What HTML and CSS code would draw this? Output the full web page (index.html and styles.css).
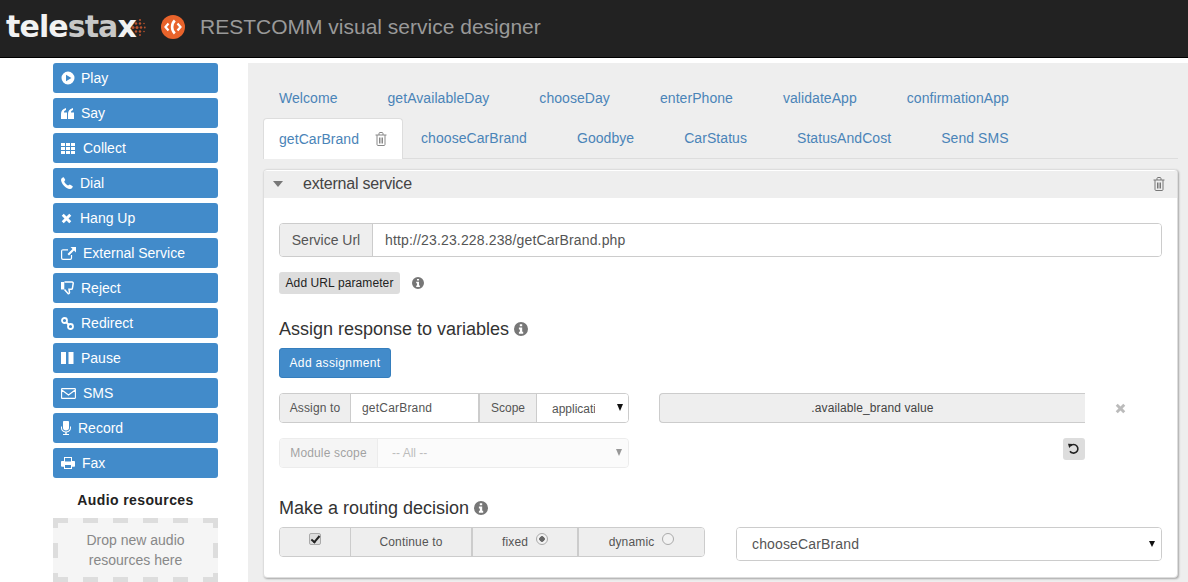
FILE: index.html
```html
<!DOCTYPE html>
<html lang="en">
<head>
    <meta charset="UTF-8">
    <title>RESTCOMM visual service designer</title>
    <link rel="stylesheet" href="styles.css">
</head>
<body>

    <svg class="defs" width="0" height="0">
        <symbol id="i-info" viewBox="0 0 14 14"><path fill-rule="evenodd" d="M7 0a7 7 0 1 0 0 14A7 7 0 0 0 7 0zM5.8 2.2h2.4v2H5.8zM4.9 5.5h3.3v4.3h1v1.9H4.9V9.8h1V7.4h-1z"/></symbol>
        <symbol id="i-trash" viewBox="0 0 12 14"><path fill="none" stroke="currentColor" d="M.5 3h11M2 3v9.5c0 .6.4 1 1 1h6c.6 0 1-.4 1-1V3M4 3V1.5c0-.6.4-1 1-1h2c.6 0 1 .4 1 1V3M4.5 5.5v6M6 5.5v6M7.5 5.5v6"/></symbol>
        <symbol id="i-times" viewBox="0 0 12 12"><path d="M3 .8 6 3.8 9 .8 11.2 3 8.2 6l3 3L9 11.2l-3-3-3 3L.8 9l3-3-3-3z"/></symbol>
    </svg>

    <header class="topbar">
        <span class="brand">tele<span class="brand-dim">sta</span>x</span>
        <svg class="brand-dots" width="15" height="19" viewBox="0 0 15 19"><g fill="#b8512c"><circle cx="9" cy="2" r="1"/><circle cx="5" cy="5.500" r="1.200"/><circle cx="9" cy="5.500" r="1.200"/><circle cx="13" cy="5.500" r=".8"/><circle cx="2" cy="9.500" r="1.500"/><circle cx="6" cy="9.500" r="1.500"/><circle cx="10" cy="9.500" r="1.300"/><circle cx="13.800" cy="9.500" r=".9"/><circle cx="5" cy="13.500" r="1.200"/><circle cx="9" cy="13.500" r="1.200"/><circle cx="13" cy="13.500" r=".8"/><circle cx="9" cy="17" r="1"/></g></svg>
        <svg class="rc-logo" width="24" height="24" viewBox="0 0 24 24"><circle cx="12" cy="12" r="12" fill="#e8632b"/><path fill="none" stroke="#fff" stroke-width="2.200" d="M7.500 8.500 4.500 12l3 3.500M16.500 8.500l3 3.500-3 3.500"/><path fill="none" stroke="#fff" stroke-width="2.600" d="M13.800 5.500C10.200 9 10.200 15 13.800 18.500"/></svg>
        <span class="app-title">RESTCOMM visual service designer</span>
    </header>

    <div class="layout">
        <aside class="sidebar">
            <div class="palette">
                <a class="verb verb-play"><svg width="14" height="14" viewBox="0 0 14 14"><path fill="#fff" fill-rule="evenodd" d="M7 .5a6.500 6.500 0 1 0 0 13 6.500 6.500 0 0 0 0-13zM5 3.800 10.400 7 5 10.200z"/></svg>Play</a>
                <a class="verb verb-say"><svg width="13" height="11" viewBox="0 0 13 11"><path fill="#fff" d="M0 6C0 3 1.500 1 5 0v2C3.500 2.400 3 3.200 3 4.500h3V11H0zM7 6c0-3 1.500-5 5-6v2c-1.500.4-2 1.200-2 2.500h3V11H7z"/></svg>Say</a>
                <a class="verb verb-collect"><svg width="14" height="11" viewBox="0 0 14 11"><path fill="#fff" d="M0 0h4v3H0zM5 0h4v3H5zM10 0h4v3h-4zM0 4h4v3H0zM5 4h4v3H5zM10 4h4v3h-4zM0 8h4v3H0zM5 8h4v3H5zM10 8h4v3h-4z"/></svg>Collect</a>
                <a class="verb verb-dial"><svg width="12" height="12" viewBox="0 0 12 12"><path fill="#fff" d="M2.800.2 4.300 3 3.200 4.500C3.800 6 5.400 7.700 7 8.600L8.800 7.500 11.800 9.200C11.700 10.500 10.500 12 9 12 4.500 11.500.5 7 0 3 0 1.500 1.500.3 2.800.2z"/></svg>Dial</a>
                <a class="verb verb-hangup"><svg width="11" height="11" viewBox="0 0 12 12"><use href="#i-times" fill="#fff"/></svg>Hang Up</a>
                <a class="verb verb-external"><svg width="15" height="13" viewBox="0 0 15 13"><path fill="none" stroke="#fff" stroke-width="1.200" d="M10.500 8v3c0 .8-.5 1.400-1.300 1.400H2C1.200 12.400.6 11.800.6 11V4.200c0-.8.600-1.400 1.400-1.400h5"/><path fill="#fff" d="M9.500 0H15v5.500L13 3.600 8 8.500 6.500 7l5-5z"/></svg>External Service</a>
                <a class="verb verb-reject"><svg width="13" height="14" viewBox="0 0 13 14"><path fill="none" stroke="#fff" stroke-width="1.500" d="M3.500 1H11c.8 0 1.300.6 1.200 1.300l-.8 5c-.1.700-.7 1-1.300 1H8l.5 3c.1 1-.7 1.700-1.500 1.200L3.500 8.500"/><path fill="#fff" d="M0 1h3.300v7.500H0z"/></svg>Reject</a>
                <a class="verb verb-redirect"><svg width="13" height="13" viewBox="0 0 13 13"><g fill="none" stroke="#fff" stroke-width="1.800"><circle cx="3.500" cy="3.500" r="2.500"/><circle cx="9.500" cy="9.500" r="2.500"/><path d="M5 5l3 3"/></g></svg>Redirect</a>
                <a class="verb verb-pause"><svg width="13" height="12" viewBox="0 0 13 12"><path fill="#fff" d="M0 0h5v12H0zM7.500 0h5v12h-5z"/></svg>Pause</a>
                <a class="verb verb-sms"><svg width="15" height="11" viewBox="0 0 15 11"><path fill="none" stroke="#fff" stroke-width="1.100" d="M1.200.6h12.600c.4 0 .6.200.6.600v8.600c0 .4-.2.600-.6.600H1.200c-.4 0-.6-.2-.6-.6V1.200c0-.4.200-.6.600-.6zM.8 2l6.700 5L14.200 2"/></svg>SMS</a>
                <a class="verb verb-record"><svg width="10" height="14" viewBox="0 0 10 14"><path fill="#fff" d="M3 0h4c.6 0 1 .5 1 1v6c0 1.500-1.200 2.500-3 2.500S2 8.500 2 7V1c0-.5.400-1 1-1zM0 5.500h1V7c0 2.200 1.800 3.500 4 3.500S9 9.200 9 7V5.500h1V7c0 2.600-1.800 4.200-4.300 4.500V13H8v1H2v-1h2.300v-1.500C1.800 11.200 0 9.600 0 7z"/></svg>Record</a>
                <a class="verb verb-fax"><svg width="14" height="12" viewBox="0 0 14 12"><path fill="#fff" fill-rule="evenodd" d="M3 0h8v4h2c.6 0 1 .4 1 1v4c0 .4-.4.800-1 .8h-2V12H3V9.800H1c-.6 0-1-.4-1-.8V5c0-.6.400-1 1-1h2zm1 1v3.500h6V1zM4 8v3h6V8z"/></svg>Fax</a>
            </div>
            <h4 class="audio-title">Audio resources</h4>
            <div class="dropzone">Drop new audio resources here</div>
        </aside>

        <main class="designer">
            <nav class="tabs">
                <a class="tab">Welcome</a>
                <a class="tab">getAvailableDay</a>
                <a class="tab">chooseDay</a>
                <a class="tab">enterPhone</a>
                <a class="tab">validateApp</a>
                <a class="tab">confirmationApp</a>
            </nav>
            <nav class="tabs tabs-last">
                <a class="tab active">getCarBrand<svg class="tab-trash" width="12" height="14"><use href="#i-trash"/></svg></a>
                <a class="tab">chooseCarBrand</a>
                <a class="tab">Goodbye</a>
                <a class="tab">CarStatus</a>
                <a class="tab">StatusAndCost</a>
                <a class="tab">Send SMS</a>
            </nav>

            <section class="card">
                <div class="card-head">
                    <span class="caret"></span>
                    <span class="card-title">external service</span>
                    <svg class="card-trash" width="12" height="14"><use href="#i-trash"/></svg>
                </div>
                <div class="card-body">
                    <div class="group group-url">
                        <span class="addon">Service Url</span>
                        <input class="field" type="text" value="http://23.23.228.238/getCarBrand.php">
                    </div>
                    <div class="param-row">
                        <button class="btn-grey">Add URL parameter</button>
                        <svg class="info" width="12" height="12"><use href="#i-info"/></svg>
                    </div>

                    <h3 class="section-title">Assign response to variables <svg class="info" width="14" height="14"><use href="#i-info"/></svg></h3>
                    <button class="btn-blue">Add assignment</button>

                    <div class="assign-row">
                        <div class="group group-small group-assign">
                            <span class="addon addon-to">Assign to</span>
                            <input class="field field-to" type="text" value="getCarBrand">
                            <span class="addon addon-scope">Scope</span>
                            <span class="select-wrap select-scope"><select class="select"><option>application</option></select></span>
                        </div>
                        <div class="readonly-value">.available_brand value</div>
                        <svg class="remove" width="11" height="11" viewBox="0 0 12 12"><use href="#i-times"/></svg>
                    </div>
                    <div class="module-row">
                        <div class="group group-small group-disabled">
                            <span class="addon addon-module">Module scope</span>
                            <span class="select-wrap select-module"><select class="select" disabled><option>-- All --</option></select></span>
                        </div>
                        <button class="btn-undo"><svg width="12" height="12" viewBox="0 0 12 12"><path fill="none" stroke="#222" stroke-width="1.600" d="M2.500 2.800A4.300 4.300 0 1 1 2 8.200"/><path fill="#222" d="M0 .8l5 .3-3.800 4z"/></svg></button>
                    </div>

                    <h3 class="section-title routing-title">Make a routing decision <svg class="info" width="14" height="14"><use href="#i-info"/></svg></h3>
                    <div class="routing-row">
                        <div class="group group-small group-routing">
                            <span class="cell cell-check"><input type="checkbox" checked></span>
                            <span class="cell cell-continue">Continue to</span>
                            <span class="cell cell-fixed">fixed <input type="radio" name="route" checked></span>
                            <span class="cell cell-dynamic">dynamic <input type="radio" name="route"></span>
                        </div>
                        <span class="select-wrap select-target"><select class="select"><option>chooseCarBrand</option></select></span>
                    </div>
                </div>
            </section>
        </main>
    </div>

</body>
</html>
```

FILE: styles.css
```css
html, body { margin: 0; height: 100%; overflow: hidden; }
body { font-family: "Liberation Sans", Arial, sans-serif; font-size: 14px; color: #333; background: #fff; }
.defs { position: absolute; }
svg { display: block; flex: none; }

.topbar { height: 58px; box-sizing: border-box; padding: 0 0 3px 6px; background: #222; border-bottom: 1px solid #000; display: flex; align-items: center; }
.brand { font-family: "DejaVu Sans", sans-serif; font-weight: bold; font-size: 30px; line-height: 30px; color: #f2f2f2; letter-spacing: -.9px; width: 125px; white-space: nowrap; }
.brand-dim { color: #c8c8c8; }
.rc-logo { margin-left: 15px; }
.app-title { margin-left: 15px; font-size: 21px; color: #999; }

.layout { display: flex; padding-top: 5px; }
.sidebar { width: 165px; margin-left: 53px; flex: none; }
.palette { display: flex; flex-direction: column; gap: 5px; }
.verb { height: 30px; background: #428bca; border-radius: 3px; color: #fff; display: flex; align-items: center; padding-left: 8px; gap: 7px; }
.verb-play { gap: 6px; }
.verb-collect, .verb-hangup { gap: 8px; }
.audio-title { margin: 0; font-size: 14px; line-height: 20px; font-weight: bold; text-align: center; padding-top: 12px; letter-spacing: .4px; color: #222; }
.dropzone { height: 64px; box-sizing: border-box; margin-top: 8px; padding: 12px 25px 0; text-align: center; line-height: 20px; color: #888;
    background-color: #f5f5f5;
    background-image: linear-gradient(90deg, #ddd 50%, transparent 50%), linear-gradient(90deg, #ddd 50%, transparent 50%), linear-gradient(#ddd 50%, transparent 50%), linear-gradient(#ddd 50%, transparent 50%);
    background-size: 30px 5px, 30px 5px, 5px 30px, 5px 30px;
    background-repeat: repeat-x, repeat-x, repeat-y, repeat-y;
    background-position: 0 0, 0 100%, 0 -5px, 100% -5px; }

.designer { margin-left: 30px; flex: 1; height: 519px; background: #eee; padding: 15px 10px 0 15px; }
.tabs { display: flex; height: 40px; }
.tabs-last { border-bottom: 1px solid #ddd; }
.tab { height: 40px; box-sizing: border-box; padding: 10px 16px; line-height: 20px; margin-right: 18px; color: #4a84b8; white-space: nowrap; letter-spacing: .06px; }
.tab.active { background: #fff; border: 1px solid #ddd; border-bottom: 0; border-radius: 4px 4px 0 0; height: 41px; padding: 10px 15px; margin-right: 2px; display: flex; align-items: center; }
.tab-trash { margin-left: 16px; color: #888; }

.card { margin-top: 10px; height: 409px; box-sizing: border-box; background: #fff; border: 1px solid #ddd; border-radius: 4px; box-shadow: 1px 1px 2px rgba(0,0,0,.3); }
.card-head { height: 27px; margin-top: 1px; padding: 0 12px 2px 9px; box-sizing: border-box; background: #eee; display: flex; align-items: center; }
.caret { width: 0; height: 0; border: 5px solid transparent; border-top: 6px solid #777; border-bottom: 0; margin-right: 20px; }
.card-title { font-size: 16px; color: #444; flex: 1; letter-spacing: -.2px; }
.card-trash { color: #777; }
.card-body { padding: 25px 15px 0; }

.group { display: flex; border: 1px solid #ccc; border-radius: 4px; box-sizing: border-box; overflow: hidden; }
.addon { background: #eee; display: flex; align-items: center; justify-content: center; flex: none; color: #555; box-sizing: border-box; }
.field { border: 0; outline: 0; font: inherit; color: #555; background: #fff; flex: 1; min-width: 0; box-sizing: border-box; }
.group-url { height: 34px; }
.group-url .addon { width: 93px; border-right: 1px solid #ccc; }
.group-url .field { padding-left: 12px; letter-spacing: .15px; }

.param-row { display: flex; align-items: center; gap: 12px; margin-top: 15px; }
.btn-grey { width: 121px; height: 22px; padding: 0; border: 0; border-radius: 3px; background: #ddd; font: 12px "Liberation Sans", sans-serif; letter-spacing: .1px; color: #222; }
.info { fill: #777; }

.section-title { margin: 24px 0 0; font-size: 18px; font-weight: normal; line-height: 22px; color: #333; display: flex; align-items: center; gap: 5px; }
.btn-blue { display: block; margin-top: 8px; width: 112px; height: 30px; padding: 0; border: 1px solid #357ebd; border-radius: 3px; background: #428bca; color: #fff; font: 12px "Liberation Sans", sans-serif; letter-spacing: .35px; }

.group-small { font-size: 12px; height: 30px; letter-spacing: .15px; }
.assign-row { display: flex; align-items: center; margin-top: 15px; }
.group-assign { width: 350px; }
.addon-to { width: 71px; border-right: 1px solid #ccc; }
.field-to { font-size: 12px; padding-left: 11px; width: 127px; flex: none; letter-spacing: .2px; }
.addon-scope { width: 59px; border-left: 2px solid #ccc; border-right: 1px solid #ccc; letter-spacing: 0; }
.select-wrap { position: relative; display: block; }
.select-wrap::after { content: ""; position: absolute; right: 5px; top: 50%; margin-top: -4px; border: 3.5px solid transparent; border-top: 7px solid #111; border-bottom: 0; pointer-events: none; }
.select { appearance: none; -webkit-appearance: none; border: 0; outline: 0; background: #fff; font: inherit; color: #555; width: 100%; height: 100%; display: block; box-sizing: border-box; }
.select-scope { flex: 1; min-width: 0; }
.select-scope .select { padding: 2px 33px 0 15px; letter-spacing: 0; }
.readonly-value { width: 426px; height: 30px; margin-left: 30px; box-sizing: border-box; background: #eee; border: 1px solid #ccc; border-width: 1px 0 1px 1px; border-radius: 4px 0 0 4px; font-size: 12px; line-height: 28px; text-align: center; color: #444; letter-spacing: .1px; }
.remove { margin-left: 30px; fill: #bbb; }

.module-row { display: flex; justify-content: space-between; align-items: flex-start; width: 806px; margin-top: 15px; }
.group-disabled { width: 350px; opacity: .55; border-color: #ddd; }
.addon-module { width: 98px; border-right: 1px solid #ddd; }
.select-module { flex: 1; }
.select-module .select { padding-left: 14px; background: #f5f5f5; letter-spacing: 0; }
.select-module::after { right: 6px; border-top-color: #444; }
.btn-undo { width: 22px; height: 22px; padding: 5px; border: 0; border-radius: 3px; background: #ddd; }

.routing-title { margin-top: 29px; }
.routing-row { display: flex; align-items: flex-start; margin-top: 8px; }
.group-routing { width: 426px; }
.cell { display: flex; align-items: center; justify-content: center; gap: 8px; background: #eee; box-sizing: border-box; color: #555; border-right: 2px solid #ccc; }
.cell input { appearance: none; -webkit-appearance: none; margin: 0; width: 12px; height: 12px; box-sizing: border-box; position: relative; top: -3px; border: 1px solid #aaa; background: #eee; }
.cell input[type=radio] { border-radius: 50%; background: #f2f2f2; }
.cell input[type=radio]:checked { background: radial-gradient(circle, #666 0, #666 2.5px, #f2f2f2 3px); }
.cell input[type=checkbox] { border-radius: 2px; background: #ddd; }
.cell input[type=checkbox]::after { content: ""; position: absolute; left: 3px; top: 0; width: 3px; height: 7px; border: solid #222; border-width: 0 2px 2px 0; transform: rotate(40deg); }
.cell-check { width: 71px; border-right-width: 1px; }
.cell-continue { width: 122px; }
.cell-fixed { width: 106px; }
.cell-dynamic { flex: 1; border-right: 0; }
.select-target { width: 426px; height: 34px; margin-left: 31px; box-sizing: border-box; border: 1px solid #ccc; border-radius: 4px; overflow: hidden; }
.select-target::after { right: 6px; margin-top: -3px; border-width: 6px 3px 0; border-style: solid; border-color: #111 transparent transparent; }
.select-target .select { padding-left: 15px; font-size: 14px; letter-spacing: .15px; }
```
